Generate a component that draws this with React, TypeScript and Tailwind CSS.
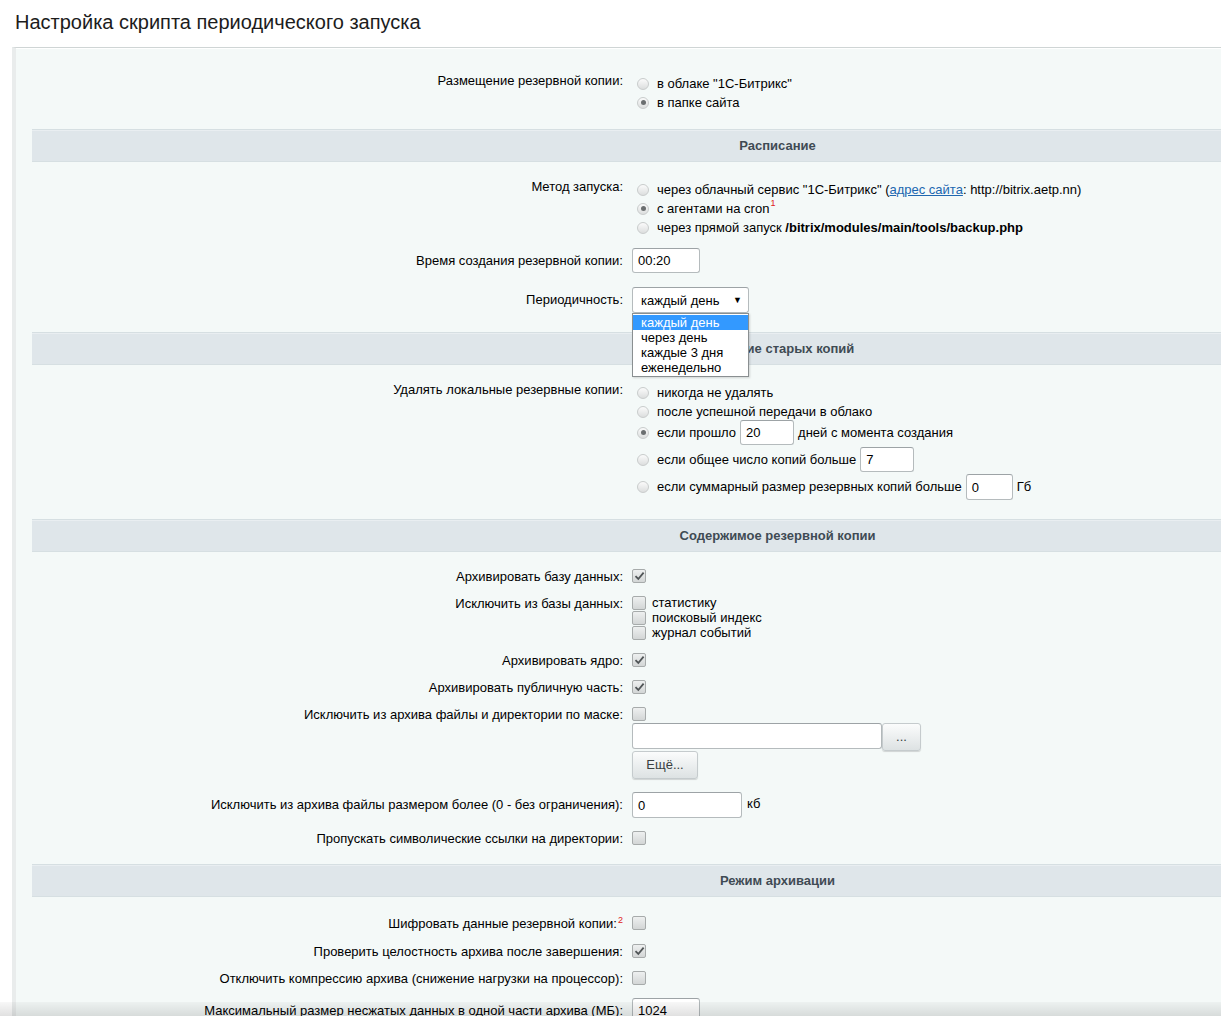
import React from "react";

const font = "font-['Liberation_Sans',Arial,sans-serif]";

function Radio({ checked }: { checked?: boolean }) {
  return (
    <span className="ml-[5px] mr-[8px] inline-flex h-[12px] w-[12px] shrink-0 items-center justify-center rounded-full border border-[#c9cccc] bg-gradient-to-b from-[#fbfbfb] to-[#dcdede]">
      {checked && <span className="h-[5px] w-[5px] rounded-full bg-[#6b6f70]" />}
    </span>
  );
}

function Check({ checked }: { checked?: boolean }) {
  return (
    <span className="inline-flex h-[14px] w-[14px] shrink-0 items-center justify-center rounded-[2px] border border-[#a7abab] bg-gradient-to-b from-[#eef0f0] to-[#d3d6d6]">
      {checked && (
        <svg width="11" height="10" viewBox="0 0 11 10">
          <path d="M1.5 5.2 L4.3 8 L9.6 1.6" fill="none" stroke="#505557" strokeWidth="1.8" />
        </svg>
      )}
    </span>
  );
}

function Row({
  label,
  children,
  className = "",
  labelClass = "relative top-[1px]",
}: {
  label: React.ReactNode;
  children: React.ReactNode;
  className?: string;
  labelClass?: string;
}) {
  return (
    <div className={"flex " + className}>
      <div className={"w-[596px] shrink-0 pr-[5px] text-right leading-[16px] " + labelClass}>{label}</div>
      <div className="pl-[4px]">{children}</div>
    </div>
  );
}

function Header({ title, className = "" }: { title: string; className?: string }) {
  return (
    <div
      className={
        "flex h-[33px] items-center justify-center border-t border-b border-[#d6dfe2] bg-[#dfe6ea] text-[13px] font-bold text-[#3f4b54] shadow-[inset_0_1px_0_#e9eef1] " +
        className
      }
    >
      {title}
    </div>
  );
}

function TextInput({ value, className = "" }: { value?: string; className?: string }) {
  return (
    <span
      className={
        "inline-flex items-center rounded-[3px] border border-[#b5bbbd] border-t-[#9da3a6] bg-white pl-[5px] pt-[1px] text-[13px] text-black " +
        className
      }
    >
      {value}
    </span>
  );
}

function Button({ children, className = "" }: { children: React.ReactNode; className?: string }) {
  return (
    <span
      className={
        "inline-flex items-center justify-center rounded-[3px] border border-[#c5cbcd] bg-gradient-to-b from-[#fbfcfc] to-[#dde2e3] text-[13px] text-[#3a3f41] shadow-[0_1px_1px_rgba(0,0,0,0.15)] " +
        className
      }
    >
      {children}
    </span>
  );
}

function Line({ children, className = "h-[19px]" }: { children: React.ReactNode; className?: string }) {
  return <div className={"flex items-center whitespace-nowrap " + className}>{children}</div>;
}

export default function App() {
  return (
    <div className={"relative h-[1016px] w-full overflow-hidden bg-white text-[13px] text-black " + font}>
      <div className="h-[47px] pl-[15px] pt-[10px] text-[20px] leading-[24px] text-[#1c1c1c]">
        Настройка скрипта периодического запуска
      </div>

      <div className="ml-[12px] h-[1000px] w-[1600px] border-t border-l-[4px] border-t-[#cfd5d5] border-l-[#e9ecec] bg-[#f4f9f8] pl-[16px] pt-[24px] shadow-[inset_0_1px_0_#ffffff]">
        <div className="w-[1491px]">
          <Row label="Размещение резервной копии:">
            <div className="pt-[2px]">
              <Line>
                <Radio />в облаке "1С-Битрикс"
              </Line>
              <Line>
                <Radio checked />в папке сайта
              </Line>
            </div>
          </Row>

          <Header title="Расписание" className="mt-[17px]" />

          <Row label="Метод запуска:" className="mt-[16px]">
            <div className="pt-[2px]">
              <Line>
                <Radio />
                через облачный сервис "1С-Битрикс" (
                <span className="text-[#2067b0] underline">адрес сайта</span>: http://bitrix.aetp.nn)
              </Line>
              <Line>
                <Radio checked />с агентами на cron
                <span className="relative -top-[5px] ml-[1px] text-[9px] leading-[9px] text-[#e02020]">1</span>
              </Line>
              <Line>
                <Radio />
                через прямой запуск&nbsp;<b>/bitrix/modules/main/tools/backup.php</b>
              </Line>
            </div>
          </Row>

          <Row label="Время создания резервной копии:" className="mt-[11px] items-center" labelClass="">
            <TextInput value="00:20" className="h-[25px] w-[68px]" />
          </Row>

          <Row label="Периодичность:" className="mt-[14px] items-center" labelClass="">
            <div className="relative">
              <span className="flex h-[26px] w-[117px] items-center justify-between rounded-[3px] border border-[#b5bbbd] border-t-[#9da3a6] bg-white pl-[8px] pr-[6px] pt-[1px]">
                каждый день
                <span className="text-[9px]">▼</span>
              </span>
              <div className="absolute left-0 top-[26px] z-10 w-[117px] border border-[#8a8f91] bg-white py-[1px] leading-[15px] shadow-[1px_1px_2px_rgba(0,0,0,0.15)]">
                <div className="h-[15px] bg-[#3399ff] pl-[8px] text-white">каждый день</div>
                <div className="h-[15px] pl-[8px]">через день</div>
                <div className="h-[15px] pl-[8px]">каждые 3 дня</div>
                <div className="h-[15px] pl-[8px]">еженедельно</div>
              </div>
            </div>
          </Row>

          <Header title="Удаление старых копий" className="mt-[19px]" />

          <Row label="Удалять локальные резервные копии:" className="mt-[16px]">
            <div className="pt-[2px]">
              <Line>
                <Radio />
                никогда не удалять
              </Line>
              <Line>
                <Radio />
                после успешной передачи в облако
              </Line>
              <Line className="-mt-[1px] h-[25px]">
                <Radio checked />
                если прошло
                <TextInput value="20" className="ml-[4px] mr-[4px] h-[25px] w-[54px]" />
                дней с момента создания
              </Line>
              <Line className="mt-[2px] h-[25px]">
                <Radio />
                если общее число копий больше
                <TextInput value="7" className="ml-[4px] h-[25px] w-[54px]" />
              </Line>
              <Line className="mt-[2px] h-[26px]">
                <Radio />
                если суммарный размер резервных копий больше
                <TextInput value="0" className="ml-[4px] mr-[4px] h-[26px] w-[47px]" />
                Гб
              </Line>
            </div>
          </Row>

          <Header title="Содержимое резервной копии" className="mt-[19px]" />

          <Row label="Архивировать базу данных:" className="mt-[16px]">
            <Line className="h-[16px]">
              <Check checked />
            </Line>
          </Row>

          <Row label="Исключить из базы данных:" className="mt-[11px]">
            <div className="leading-[15px]">
              <Line className="h-[15px]">
                <Check />
                <span className="ml-[6px]">статистику</span>
              </Line>
              <Line className="h-[15px]">
                <Check />
                <span className="ml-[6px]">поисковый индекс</span>
              </Line>
              <Line className="h-[15px]">
                <Check />
                <span className="ml-[6px]">журнал событий</span>
              </Line>
            </div>
          </Row>

          <Row label="Архивировать ядро:" className="mt-[12px]">
            <Line className="h-[16px]">
              <Check checked />
            </Line>
          </Row>

          <Row label="Архивировать публичную часть:" className="mt-[11px]">
            <Line className="h-[16px]">
              <Check checked />
            </Line>
          </Row>

          <Row label="Исключить из архива файлы и директории по маске:" className="mt-[11px]">
            <Line className="h-[16px]">
              <Check />
            </Line>
            <div className="mt-[1px] flex items-start">
              <TextInput className="h-[26px] w-[250px]" />
              <Button className="h-[28px] w-[39px] text-[11px]">...</Button>
            </div>
            <Button className="h-[28px] w-[66px]">Ещё...</Button>
          </Row>

          <Row
            label="Исключить из архива файлы размером более (0 - без ограничения):"
            className="mt-[13px] items-center"
            labelClass=""
          >
            <div className="flex items-center">
              <TextInput value="0" className="h-[26px] w-[110px]" />
              <span className="-mt-[3px] ml-[5px]">кб</span>
            </div>
          </Row>

          <Row label="Пропускать символические ссылки на директории:" className="mt-[12px]">
            <Line className="h-[16px]">
              <Check />
            </Line>
          </Row>

          <Header title="Режим архивации" className="mt-[18px]" />

          <Row
            label={
              <>
                Шифровать данные резервной копии:
                <span className="relative -top-[5px] ml-[1px] text-[9px] leading-[9px] text-[#e02020]">2</span>
              </>
            }
            labelClass="relative top-[1px] pr-[4px]"
            className="mt-[18px]"
          >
            <Line className="h-[16px]">
              <Check />
            </Line>
          </Row>

          <Row label="Проверить целостность архива после завершения:" className="mt-[12px]">
            <Line className="h-[16px]">
              <Check checked />
            </Line>
          </Row>

          <Row label="Отключить компрессию архива (снижение нагрузки на процессор):" className="mt-[11px]">
            <Line className="h-[16px]">
              <Check />
            </Line>
          </Row>

          <Row
            label="Максимальный размер несжатых данных в одной части архива (МБ):"
            className="mt-[12px] items-center"
            labelClass=""
          >
            <TextInput value="1024" className="h-[25px] w-[68px]" />
          </Row>
        </div>
      </div>

      <div className="pointer-events-none absolute bottom-0 left-0 h-[14px] w-full bg-gradient-to-b from-black/[0.03] to-black/[0.12]" />
    </div>
  );
}
